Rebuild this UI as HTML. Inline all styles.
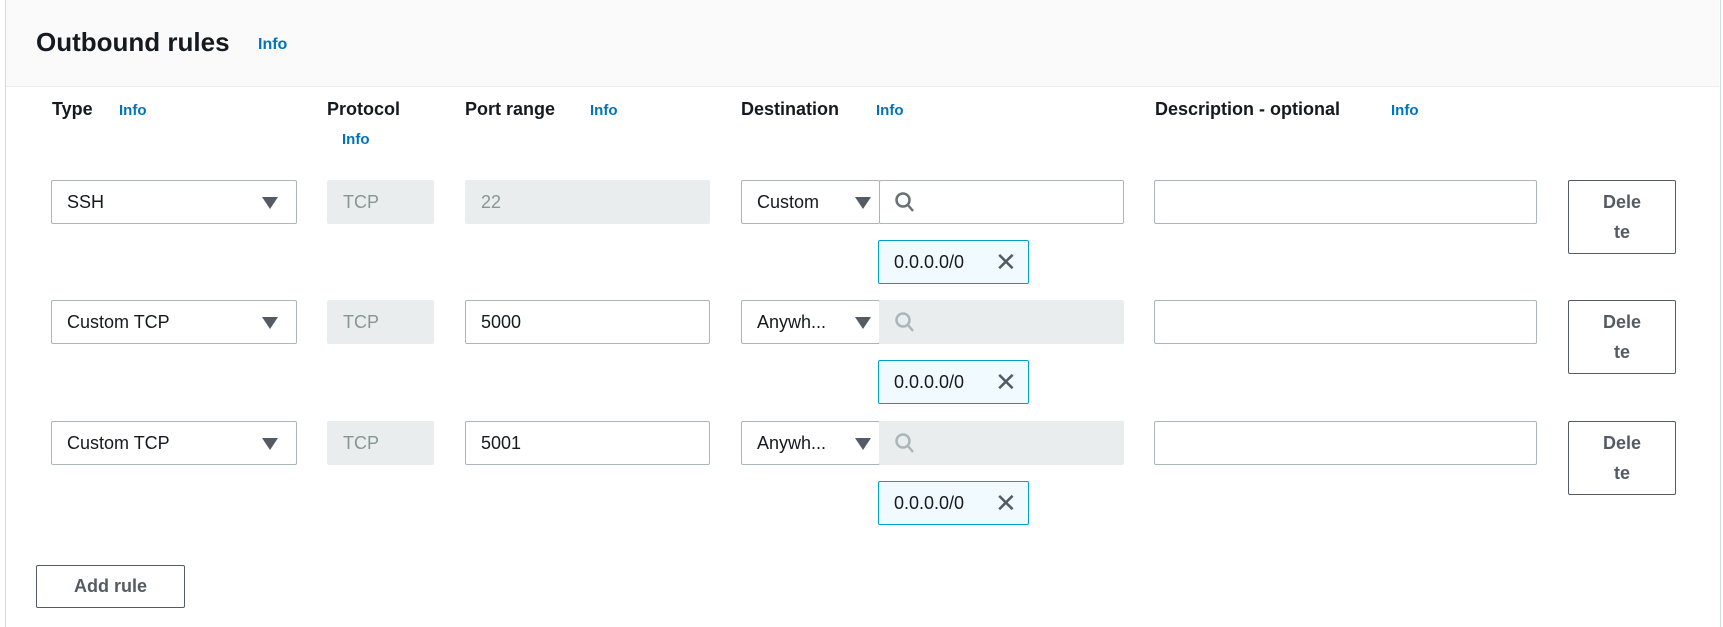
<!DOCTYPE html>
<html><head><style>
body{margin:0;width:1723px;height:627px;background:#fff;font-family:"Liberation Sans",sans-serif;position:relative;overflow:hidden;color:#16191f}
.a{position:absolute}
.hdr{left:5px;top:0;width:1714px;height:86px;background:#fafafa;border-bottom:1px solid #eaeded}
.vl{top:0;width:1px;height:627px;background:#d5dbdb}
h1{position:absolute;left:36px;top:27px;margin:0;font-size:26px;font-weight:bold}
.info{color:#0073bb;font-weight:bold;font-size:15px}
.th{font-weight:bold;font-size:18px;top:99px}
.box{box-sizing:border-box;height:44px;border:1px solid #aab7b8;border-radius:2px;font-size:18px;line-height:42px;padding-left:15px;background:#fff}
.dis{background:#eaeded;border-color:#eaeded;color:#879596}
.tri{position:absolute;right:18px;top:16px;width:0;height:0;border-left:8px solid transparent;border-right:8px solid transparent;border-top:12px solid #545b64}
.tok{box-sizing:border-box;height:44px;width:151px;border:1px solid #00a1c9;background:#f1faff;border-radius:2px;font-size:18px;line-height:42px;padding-left:15px}
.btn{box-sizing:border-box;border:1px solid #545b64;border-radius:2px;color:#545b64;font-weight:bold;font-size:18px;text-align:center;background:#fff}
</style></head><body>
<div class="a hdr"></div>
<div class="a vl" style="left:5px"></div>
<div class="a vl" style="left:1720px"></div>
<h1>Outbound rules</h1>
<div class="a info" style="left:258px;top:36px;font-size:16px">Info</div>
<div class="a th" style="left:52px">Type</div><div class="a info" style="left:119px;top:102px">Info</div>
<div class="a th" style="left:327px">Protocol</div><div class="a info" style="left:342px;top:131px">Info</div>
<div class="a th" style="left:465px">Port range</div><div class="a info" style="left:590px;top:102px">Info</div>
<div class="a th" style="left:741px">Destination</div><div class="a info" style="left:876px;top:102px">Info</div>
<div class="a th" style="left:1155px">Description - optional</div><div class="a info" style="left:1391px;top:102px">Info</div>

<div class="a box" style="left:51px;top:180px;width:246px">SSH<div class="tri"></div></div>
<div class="a box dis" style="left:327px;top:180px;width:107px">TCP</div>
<div class="a box dis" style="left:465px;top:180px;width:245px">22</div>
<div class="a box" style="left:741px;top:180px;width:139px">Custom<div class="tri" style="right:8px"></div></div>
<div class="a box" style="left:879px;top:180px;width:245px"><svg width="22" height="24" style="position:absolute;left:14px;top:10px"><circle cx="9" cy="9" r="6.5" fill="none" stroke="#687078" stroke-width="2.5"/><line x1="13.5" y1="13.5" x2="19" y2="20" stroke="#687078" stroke-width="2.5"/></svg></div>
<div class="a box" style="left:1154px;top:180px;width:383px"></div>
<div class="a btn" style="left:1568px;top:180px;width:108px;height:74px;line-height:30px;padding-top:6px">Dele<br>te</div>
<div class="a tok" style="left:878px;top:240px">0.0.0.0/0<span style="position:absolute;left:116px;top:0;color:#545b64;font-size:26px">✕</span></div>

<div class="a box" style="left:51px;top:300px;width:246px">Custom TCP<div class="tri"></div></div>
<div class="a box dis" style="left:327px;top:300px;width:107px">TCP</div>
<div class="a box" style="left:465px;top:300px;width:245px">5000</div>
<div class="a box" style="left:741px;top:300px;width:139px">Anywh...<div class="tri" style="right:8px"></div></div>
<div class="a box dis" style="left:879px;top:300px;width:245px"><svg width="22" height="24" style="position:absolute;left:14px;top:10px"><circle cx="9" cy="9" r="6.5" fill="none" stroke="#aab7b8" stroke-width="2.5"/><line x1="13.5" y1="13.5" x2="19" y2="20" stroke="#aab7b8" stroke-width="2.5"/></svg></div>
<div class="a box" style="left:1154px;top:300px;width:383px"></div>
<div class="a btn" style="left:1568px;top:300px;width:108px;height:74px;line-height:30px;padding-top:6px">Dele<br>te</div>
<div class="a tok" style="left:878px;top:360px">0.0.0.0/0<span style="position:absolute;left:116px;top:0;color:#545b64;font-size:26px">✕</span></div>

<div class="a box" style="left:51px;top:421px;width:246px">Custom TCP<div class="tri"></div></div>
<div class="a box dis" style="left:327px;top:421px;width:107px">TCP</div>
<div class="a box" style="left:465px;top:421px;width:245px">5001</div>
<div class="a box" style="left:741px;top:421px;width:139px">Anywh...<div class="tri" style="right:8px"></div></div>
<div class="a box dis" style="left:879px;top:421px;width:245px"><svg width="22" height="24" style="position:absolute;left:14px;top:10px"><circle cx="9" cy="9" r="6.5" fill="none" stroke="#aab7b8" stroke-width="2.5"/><line x1="13.5" y1="13.5" x2="19" y2="20" stroke="#aab7b8" stroke-width="2.5"/></svg></div>
<div class="a box" style="left:1154px;top:421px;width:383px"></div>
<div class="a btn" style="left:1568px;top:421px;width:108px;height:74px;line-height:30px;padding-top:6px">Dele<br>te</div>
<div class="a tok" style="left:878px;top:481px">0.0.0.0/0<span style="position:absolute;left:116px;top:0;color:#545b64;font-size:26px">✕</span></div>

<div class="a btn" style="left:36px;top:565px;width:149px;height:43px;line-height:41px">Add rule</div>
</body></html>
